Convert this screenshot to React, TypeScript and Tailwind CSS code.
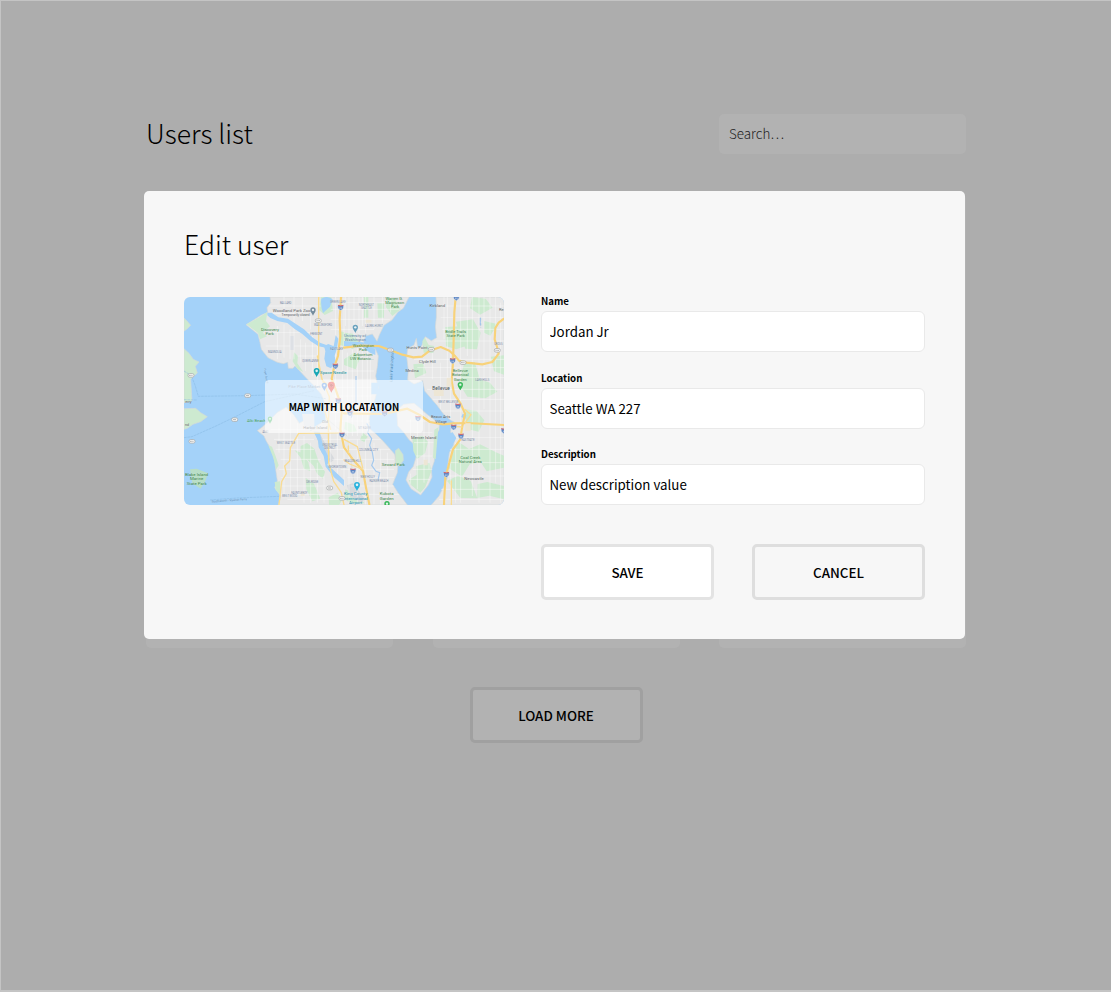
import type { ReactNode } from "react";

const WATER = "#a4d2f9";
const LAND = "#e8e8e8";
const PARK = "#cdead0";
const ROAD = "#f9dc93";

function Shield({ x, y }: { x: number; y: number }) {
  return (
    <g transform={`translate(${x} ${y})`}>
      <path d="M-8-7Q0-4 8-7Q11 5 0 9Q-11 5-8-7Z" fill="#5c86c4" stroke="#dbe5f3" strokeWidth="1.5" />
      <path d="M-8-6Q0-3 8-6" stroke="#d4656a" strokeWidth="3" fill="none" />
      <path d="M-2 0V5M2 0V5" stroke="#fff" strokeWidth="1.5" />
    </g>
  );
}

function RouteSign({ x, y }: { x: number; y: number }) {
  return (
    <g transform={`translate(${x} ${y})`}>
      <rect x="-9" y="-5.5" width="18" height="11" rx="5" fill="#f5f5f3" stroke="#a3a6a8" strokeWidth="2" />
      <path d="M-5 0H5" stroke="#8b8e91" strokeWidth="3" strokeDasharray="2 1.5" />
    </g>
  );
}

function Pin({ x, y, color, scale = 1 }: { x: number; y: number; color: string; scale?: number }) {
  return (
    <g transform={`translate(${x} ${y}) scale(${scale})`}>
      <path d="M0 13C-3 6-8 3-8-4A8 8 0 1 1 8-4C8 3 3 6 0 13Z" fill={color} />
      <circle cy="-4" r="3.5" fill="#fff" fillOpacity=".85" />
    </g>
  );
}

function Label({
  x,
  y,
  size = 12,
  color = "#5f6368",
  children,
  rotate = 0,
}: {
  x: number;
  y: number;
  size?: number;
  color?: string;
  children: ReactNode;
  rotate?: number;
}) {
  return (
    <text
      x={x}
      y={y}
      fontSize={size}
      fill={color}
      stroke="#fff"
      strokeOpacity=".25"
      strokeWidth="1"
      paintOrder="stroke"
      textAnchor="middle"
      transform={rotate ? `rotate(${rotate} ${x} ${y})` : undefined}
    >
      {children}
    </text>
  );
}

const streets = [
  "M255 30H410M262 52H330M330 3V90M355 3V75M300 3V60M380 60V100M330 85V190M318 100V190M300 85V185M262 110H410M245 150H318M280 90V190M350 130V200M330 150H400M340 180H400M365 140V225M385 120V240M400 150V300",
  "M480 3V150M495 3V140M510 3V130M525 3V120M545 3V110M570 3V100M595 3V80M440 40H650M440 70H620M420 20H640M440 100H570M455 3V120M485 3V90M535 3V90M620 3V50",
  "M420 225H570M410 250H575M430 275H570M445 300H565M440 325H560M440 350H560M440 375H558M455 170V400M475 160V430M490 170V430M505 160V420M520 150V420M535 150V420M550 160V420M560 190V320",
  "M285 345V470M300 335V600M320 340V590M340 360V600M260 400H390M270 430H390M275 460H390M290 490H410M285 520H420M290 545H420M290 570H430M290 595H470M360 420V620M380 440V620M400 500V620M420 540V620M310 610H480",
  "M415 430H600M430 460H620M445 490H630M470 520H630M490 545H630M500 570H640M500 595H650M440 400V520M460 400V540M480 410V570M495 430V625M520 430V625M545 430V625M570 440V625M590 460V625M610 470V625",
  "M760 30H960M770 65H960M775 100H960M750 135H960M690 190H960M700 215H960M700 245H960M720 280H960M745 310H960M760 345H960M785 425H960M780 460H960M775 500H960M770 540H960M760 580H960M765 610H960",
  "M780 3V130M790 3V250M830 3V620M850 3V180M865 3V600M885 3V620M900 3V340M918 3V620M935 3V560M950 20V620M770 200V340M745 170V250M800 170V380M720 190V240M785 430V620M800 480V620M815 440V620",
  "M680 370V575M700 350V580M720 350V560M735 350V520M665 375H740M690 410H745M690 440H748M695 480H745M680 520H745M675 550H740",
];

const labels: Array<[number, number, string, number?, string?, number?]> = [
  [305, 23, "BALLARD", 8],
  [323, 48, "Woodland Park Zoo", 13],
  [335, 60, "Temporarily closed", 10],
  [258, 104, "Discovery", 12.5, "#357f44"],
  [257, 117, "Park", 12.5, "#357f44"],
  [417, 90, "WALLINGFORD", 8],
  [397, 116, "FREMONT", 8],
  [272, 171, "MAGNOLIA", 8],
  [379, 199, "QUEEN ANNE", 8],
  [458, 163, "EASTLAKE", 8],
  [462, 21, "GREEN LAKE", 8],
  [448, 234, "Space Needle", 13, "#0c8e96"],
  [361, 276, "Pike Place Market", 12, "#6689ae"],
  [547, 31, "NORTHEAST", 8],
  [547, 40, "SEATTLE", 8],
  [570, 94, "LAURELHURST", 8],
  [513, 122, "University of", 12, "#557b9d"],
  [514, 136, "Washington", 12, "#557b9d"],
  [538, 153, "Washington", 12, "#357f44"],
  [537, 166, "Park", 12, "#357f44"],
  [537, 180, "Arboretum", 12, "#357f44"],
  [534, 193, "UW Botanic...", 12, "#357f44"],
  [631, 11, "Warren G.", 12, "#357f44"],
  [632, 24, "Magnuson", 12, "#357f44"],
  [633, 37, "Park", 12, "#357f44"],
  [760, 32, "Kirkland", 13],
  [815, 111, "Bridle Trails", 12, "#357f44"],
  [815, 124, "State Park", 12, "#357f44"],
  [699, 158, "Hunts Point", 12],
  [730, 201, "Clyde Hill", 12],
  [684, 227, "Medina", 12],
  [829, 228, "Bellevue", 12, "#357f44"],
  [829, 241, "Botanical", 12, "#357f44"],
  [829, 254, "Garden", 12, "#357f44"],
  [771, 283, "Bellevue", 14, "#444b52"],
  [952, 44, "Re", 12],
  [943, 148, "CROSS", 8],
  [895, 255, "LAKE HILLS", 8],
  [627, 212, "Lake Washington", 12, "#4486b5", -87],
  [890, 80, "140th Ave", 7, "#74a8d4", -90],
  [770, 367, "Beaux Arts", 12],
  [771, 381, "Village", 12],
  [793, 321, "WEST BELLEVUE", 8],
  [719, 429, "Mercer Island", 12.5],
  [852, 436, "EASTGATE", 8],
  [859, 488, "Coal Creek", 12.5, "#357f44"],
  [859, 502, "Natural Area", 12.5, "#357f44"],
  [870, 553, "Newcastle", 12.5],
  [628, 511, "Seward Park", 12.5, "#357f44"],
  [506, 497, "BEACON HILL", 8],
  [553, 465, "COLUMBIA CITY", 8],
  [551, 547, "NEW HOLLY", 8],
  [585, 557, "RAINIER BEACH", 8],
  [542, 399, "MT BAKER", 8],
  [515, 597, "King County", 13, "#178cae"],
  [515, 611, "International", 13, "#178cae"],
  [515, 624, "Airport", 13, "#178cae"],
  [608, 598, "Kubota", 13, "#357f44"],
  [608, 612, "Garden", 13, "#357f44"],
  [217, 378, "Alki Beach", 12, "#3d9b57"],
  [244, 410, "ALKI", 8],
  [306, 443, "WEST SEATTLE", 8],
  [423, 381, "Old", 12],
  [394, 398, "Harbor Island", 12],
  [438, 449, "INDUSTRIAL", 8],
  [438, 459, "DISTRICT", 8],
  [460, 515, "GEORGETOWN", 8],
  [385, 560, "DELRIDGE", 8],
  [346, 594, "FAUNTLEROY", 8],
  [317, 603, "WEST WOOD", 8],
  [38, 540, "Blake Island", 13, "#357f44"],
  [38, 553, "Marine", 13, "#357f44"],
  [38, 567, "State Park", 13, "#357f44"],
  [136, 616, "Southworth - Vashon Ferry", 9, "#4c83b5", -4],
  [244, 240, "Puget Sound", 8, "#4d8abe", 80],
  [13, 322, "erry", 11],
  [9, 389, "nd", 11],
];

function SeattleMap() {
  return (
    <svg viewBox="0 3 960 624" preserveAspectRatio="none" className="block h-full w-full" fontFamily="Roboto, sans-serif">
      <rect y="3" width="960" height="624" fill={WATER} />

      <g stroke="#d5d9da" strokeWidth="2" fill={LAND}>
        <path d="M0 66L9 75L20 88L8 100L0 105ZM0 158L15 172L28 190L45 198L34 211L40 231L30 240L20 250L24 315L0 320Z" fill={PARK} />
        <path d="M0 338L35 337L50 350L70 362L50 377L27 385L10 397L0 400Z" fill={PARK} />
        <path d="M18 520L38 518L72 532L64 555L50 578L25 562Z" fill="#b9dec7" stroke="none" />
        <path d="M258 3L260 20L249 35L251 49L231 58L209 72L186 86L206 102L222 115L228 140L232 160L252 185L280 199L298 203L311 199L313 217L327 217L333 210L350 228L366 245L391 270L412 295L424 325L424 400L480 627H670L659 612L642 590L626 565L640 530L642 508L632 475L615 455L592 430L575 413L558 399L555 370L562 337L572 313L582 275L575 240L580 212L583 180L574 158L548 154L538 140L545 120L565 114L579 136L586 117L600 88L624 72L642 48L658 37L675 3Z" />
        <path d="M283 627L290 600L272 575L280 555L275 520L272 494L265 465L247 436L240 420L220 404L235 393L259 371L279 350L306 334L329 356L346 382L358 375L362 360L377 365L380 405L393 392L430 370L490 420L520 627Z" />
        <path d="M756 3L757 30L757 64L754 92L758 125L742 134L724 122L713 150L701 156L697 127L690 147L671 158L668 182L673 222L671 251L690 264L716 254L722 285L741 307L760 329L779 355L800 373L812 379L801 392L800 410L812 425L809 447L796 470L791 512L792 540L780 570L765 600L742 627H960V3Z" />
        <path d="M638 343L659 325L690 322L712 340L728 354L755 374L766 385L765 402L751 423L752 463L751 495L742 522L744 543L733 567L710 597L681 578L666 552L674 528L688 511L697 481L694 449L674 430L659 409L641 389Z" />
        <path d="M634 464L644 457L657 476L658 493L646 510L634 503Z" fill={PARK} />
      </g>

      <g fill={PARK}>
        <path d="M188 85L210 73L232 60L250 48L246 75L258 91L236 110L249 121L228 130L222 111Z" />
        <path d="M411 3H442L447 45L422 57L405 42ZM464 105L480 108V150L467 147Z" />
        <path d="M481 110L507 113L529 144L505 160L481 142ZM480 190L510 170L530 181L515 220L480 207Z" />
        <path d="M540 3H553V65H540ZM610 3L632 8L650 40L625 60L606 34ZM580 22H600V65H582Z" />
        <path d="M784 93L825 91L846 115V150L817 160L786 151ZM815 77L867 70L890 110L879 160L844 158Z" />
        <path d="M840 205L872 198L888 250L918 260L940 287L904 307L850 302L824 260ZM864 3L905 8L926 35L888 56L858 37ZM920 182L960 178V236L930 226ZM900 75L940 84L919 119L900 110Z" />
        <path d="M715 136L722 124L734 147L751 150L748 171L719 170ZM688 205L718 202L727 231L693 247Z" />
        <path d="M350 450L369 441L391 458L403 494L423 527L417 548L399 533L389 510L370 491L349 478ZM332 463L354 471L373 499L379 525L360 519L350 485ZM365 545L390 563L409 608L385 616L367 580Z" />
        <path d="M272 558L288 556L289 596L275 582ZM253 448L264 452L275 481L284 508L277 520L267 483ZM434 604L461 590L475 611L465 627H435Z" />
        <path d="M685 425L717 420L732 438L723 472L699 489L688 465ZM697 510L737 500L742 526L724 573L709 590L681 567L674 552L698 536ZM751 401L763 394L755 490L747 485Z" />
        <path d="M806 454L824 438L855 459L888 445L939 470L960 479V515L908 526L890 498L857 505L834 542L792 515ZM789 554L822 539L860 554L880 607L829 606ZM881 564L910 558L960 570V610L916 599L880 606ZM840 340L877 344L901 373L884 407L849 399Z" />
        <path d="M484 377L510 386L519 406L498 409L481 399ZM484 580L509 590L542 622H500L481 609ZM536 410L551 422L541 438L528 431Z" />
        <path d="M330 169L342 180L340 202L358 228L340 218L326 196ZM427 3L446 13L439 48L418 38Z" />
      </g>

      <g fill="#d6d9dd">
        <path d="M394 409L406 410L425 445L452 490L439 500L412 469ZM489 568L507 561L542 608L532 622L498 600Z" />
        <path d="M318 120H330V162H318ZM354 354H391V402H363Z" fill="#dde0e5" />
      </g>

      <g stroke="#fafafa" strokeOpacity=".75" fill="none" strokeWidth="2">
        {streets.map((d) => (
          <path key={d} d={d} clipPath="url(#mapLand)" />
        ))}
      </g>
      <clipPath id="mapLand">
        <path d="M258 3L260 20L249 35L251 49L245 55L235 70L225 90L228 130L237 158L260 182L285 197L328 202L366 243L412 295L424 345L424 400L393 398L380 410L380 366L362 363L346 387L306 340L259 381L240 410L265 465L279 520L283 580L292 600L285 627H665L626 565L640 510L615 455L558 399L560 340L582 275L583 180L574 158L538 140L545 120L579 136L600 88L642 48L670 3Z" />
        <path d="M758 3L760 130L735 140L701 160L672 160L674 248L716 252L741 305L779 353L812 379L801 410L812 430L793 470L792 540L748 627H960V3ZM641 343L690 325L728 356L765 387L751 423L751 495L744 543L710 595L669 552L697 500L694 449L641 389Z" />
      </clipPath>

      <g fill={WATER}>
        <path d="M412 8Q430-3 446 10L438 32L417 51Q409 31 412 8ZM455 118L463 128L459 156L452 180L455 196L441 217L427 211L421 188L424 166L420 150L433 144L449 151ZM562 260H582V295H562ZM480 135L536 139L548 150L574 158V177L558 170L535 153L510 155L480 150Z" />
        <path d="M250 50L263 50L283 64L312 68L337 85L360 100L385 124L408 140L427 147L425 155L404 151L380 136L354 113L332 99L310 81L280 75L259 66L250 58Z" />
        <path d="M389 407L407 408L412 430L420 455L437 490L430 507L448 522L480 552V570L450 544L425 512L419 480L404 454L402 434Z" />
        <path d="M792 413L806 409L817 426L809 441ZM836 353L847 357L844 369L832 363Z" />
      </g>
      <path
        d="M548 382L556 395L551 410L563 428L557 448L565 469L569 493L563 508L576 526L587 530L582 552M516 240V318L502 365M889 65V88"
        stroke="#a4c9ee"
        strokeWidth="3.5"
        fill="none"
      />
      <path
        d="M0 225L22 239L34 270L43 301L190 299L332 294L425 308M0 425L24 422L96 390L160 359L242 317L390 284M78 612L160 606L285 601M0 311L38 312"
        stroke="#86b8e1"
        strokeWidth="1.5"
        strokeDasharray="8 2"
        fill="none"
      />

      <g fill="none" strokeLinejoin="round" strokeLinecap="round">
        <g stroke="#f8d27a" strokeWidth="6.5">
          <path d="M471 3L467 70L469 120L462 180L450 215L443 248L457 286L474 334L469 400L480 454L505 488L537 525L546 575L556 625" />
          <path d="M480 155L530 149L584 150L620 163L655 176L688 184L714 182L737 164L770 153L796 164L814 181L825 194L848 200L895 205L925 198L944 173L939 153L932 130L934 96L944 80L960 68" />
          <path d="M815 3L811 50L809 130L807 200L803 255L810 293L830 323L843 353L834 395L829 430L807 460L796 500L784 545L780 627" />
          <path d="M480 352L600 354L670 338L707 357L738 378L777 385L808 382L850 381L905 384L960 387" />
        </g>
        <g stroke={ROAD} strokeWidth="4">
          <path d="M404 3V210L414 250L436 302L433 393L434 500L449 556L472 590L480 627M285 625L293 557L307 533L302 510L317 495L319 455L344 412L480 410M480 430L520 452L536 515M420 340L440 400M400 180L415 253L444 278" />
          <path d="M493 450V470M480 492L497 504L537 520M802 627V555M844 380L861 356L842 340M801 390L834 393" />
        </g>
      </g>

      <g fill="#ede6d5">
        <path d="M788 245H802V272H788ZM749 282H779V300H750ZM719 491H731V508H719ZM351 587H362V600H350ZM844 382H860V405H844ZM545 71H562V80H545Z" />
      </g>
      {labels.map(([x, y, text, size, color, rotate]) => (
        <Label key={`${x}-${y}`} x={x} y={y} size={size} color={color ?? (size === 8 ? "#7385a3" : "#595d63")} rotate={rotate}>
          {text}
        </Label>
      ))}

      <Shield x={470} y={34} />
      <Shield x={454} y={210} />
      <Shield x={817} y={5} />
      <Shield x={806} y={194} />
      <Shield x={463} y={314} />
      <Shield x={474} y={416} />
      <Shield x={498} y={351} />
      <Shield x={602} y={353} />
      <Shield x={702} y={367} />
      <Shield x={822} y={330} />
      <Shield x={809} y={393} />
      <Shield x={831} y={420} />
      <Shield x={787} y={535} />
      <Shield x={507} y={525} />
      <Shield x={960} y={404} />
      <RouteSign x={403} y={74} />
      <RouteSign x={619} y={162} />
      <RouteSign x={742} y={160} />
      <RouteSign x={837} y={200} />
      <RouteSign x={940} y={163} />
      <RouteSign x={21} y={238} />
      <RouteSign x={191} y={299} />
      <RouteSign x={152} y={371} />
      <RouteSign x={24} y={436} />
      <RouteSign x={437} y={576} />
      <RouteSign x={474} y={607} />
      <Pin x={387} y={46} color="#748c9c" />
      <Pin x={514} y={98} color="#68a1bd" />
      <Pin x={398} y={229} color="#16a6b6" scale={1.1} />
      <Pin x={421} y={272} color="#518fe0" />
      <Pin x={442} y={273} color="#e74340" scale={1.3} />
      <circle cx="442" cy="268" r="5" fill="#b92d2b" />
      <Pin x={829} y={270} color="#39b85a" />
      <Pin x={258} y={372} color="#4dbb70" scale={0.85} />
      <Pin x={519} y={571} color="#28b2dd" scale={1.1} />
      <Pin x={609} y={627} color="#39b85a" />
    </svg>
  );
}

function Field({ label, value }: { label: string; value: string }) {
  return (
    <label className="block h-[76.6px]">
      <span className="block h-[14px] text-[9.7px] leading-[9px] font-bold">{label}</span>
      <input
        defaultValue={value}
        className="block h-[41px] w-full rounded-[6px] border border-[#e9e9e9] bg-white px-[7.5px] text-[13.3px] leading-5 text-black outline-none"
      />
    </label>
  );
}

export default function App() {
  return (
    <main className="relative h-[992px] w-[1111px] overflow-hidden border-t border-b-2 border-l border-[#c4c4c4] bg-[#adadad] font-['Noto_Sans_CJK_SC',sans-serif] text-black">
      <div className="ml-[145px] w-[820px] pt-[113px]">
        <header className="flex h-10 items-center justify-between">
          <h1 className="-mt-[2px] text-[26.5px] leading-[38px] font-light">Users list</h1>
          <div className="h-10 w-[247px] rounded-[5px] bg-[#b2b2b2] px-[10px] text-[13.4px] leading-[39px] font-light text-[#222]">
            Search…
          </div>
        </header>
        <div className="mt-10 grid h-[454px] grid-cols-[247px_247px_247px] justify-between">
          <div className="rounded-[5px] bg-[#b2b2b2]" />
          <div className="rounded-[5px] bg-[#b2b2b2]" />
          <div className="rounded-[5px] bg-[#b2b2b2]" />
        </div>
        <button className="mx-auto mt-[39px] block h-[56px] w-[173px] rounded-[5px] border-[3px] border-[#a0a0a0] bg-[#b2b2b2] text-[13.4px] leading-5 font-medium">
          LOAD MORE
        </button>
      </div>

      <section className="absolute top-[190px] left-[143px] h-[448px] w-[821px] rounded-[5px] bg-[#f7f7f7] px-10 pt-[34px]">
        <h2 className="h-[72px] text-[26.5px] leading-[38px] font-light">Edit user</h2>
        <div className="flex gap-[37px]">
          <div className="relative h-[208px] w-[320px] shrink-0 overflow-hidden rounded-[6px]">
            <SeattleMap />
            <div className="absolute top-[83px] left-[81px] flex h-[53px] w-[158px] items-center justify-center rounded-[4px] bg-white/60 pt-[2px] text-[9.7px] font-bold">
              MAP WITH LOCATATION
            </div>
          </div>
          <form className="w-[385px]">
            <Field label="Name" value="Jordan Jr" />
            <Field label="Location" value="Seattle WA 227" />
            <Field label="Description" value="New description value" />
            <div className="mt-[17px] flex justify-between">
              <button
                type="button"
                className="h-[56px] w-[173px] rounded-[5px] border-[3px] border-[#e3e3e3] bg-white text-[13.4px] leading-5 font-medium"
              >
                SAVE
              </button>
              <button
                type="button"
                className="h-[56px] w-[173px] rounded-[5px] border-[3px] border-[#dedede] bg-[#f7f7f7] text-[13.4px] leading-5 font-medium"
              >
                CANCEL
              </button>
            </div>
          </form>
        </div>
      </section>
    </main>
  );
}
